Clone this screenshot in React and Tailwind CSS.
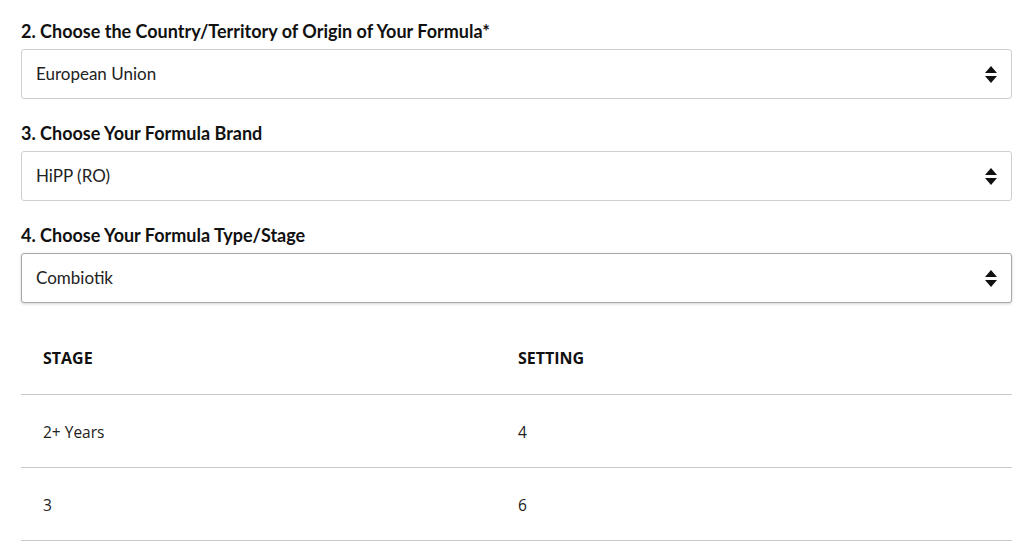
import React from 'react';

function Arrows() {
  return (
    <svg width="12" height="17" viewBox="0 0 12 17" className="shrink-0">
      <path d="M6 0 L12 7 L0 7 Z" fill="#111" />
      <path d="M0 10 L12 10 L6 17 Z" fill="#111" />
    </svg>
  );
}

function Select({ label, value, focused }) {
  return (
    <div className="flex flex-col">
      <label className="text-[18px] font-bold text-[#111] leading-[20px] pt-[1px] mb-[8px]">{label}</label>
      <div
        className={
          'h-[50px] flex items-center justify-between pl-[14px] pr-[14px] rounded-[3px] bg-white border ' +
          (focused ? 'border-[#a8a8a8] shadow-[0_1px_3px_rgba(0,0,0,0.18)]' : 'border-[#cfcfcf]')
        }
      >
        <span className="text-[17px] text-[#222]">{value}</span>
        <Arrows />
      </div>
    </div>
  );
}

const rows = [
  { stage: '2+ Years', setting: '4' },
  { stage: '3', setting: '6' },
];

export default function App() {
  return (
    <div className="w-[1034px] h-[560px] bg-white px-[21px] pt-[20px] font-['Lato',sans-serif]">
      <div className="w-[991px] flex flex-col gap-[23px]">
        <Select label="2. Choose the Country/Territory of Origin of Your Formula*" value="European Union" />
        <Select label="3. Choose Your Formula Brand" value="HiPP (RO)" />
        <Select label="4. Choose Your Formula Type/Stage" value="Combiotik" focused />
      </div>
      <div className="w-[991px] mt-[18px] font-['Open_Sans',sans-serif] text-[15.5px] text-[#222]">
        <div className="grid grid-cols-[475px_1fr] h-[74px] items-center border-b border-[#c8c8c8] pl-[22px] text-[16px] font-bold text-[#111]">
          <span>STAGE</span>
          <span>SETTING</span>
        </div>
        {rows.map((r) => (
          <div key={r.stage} className="grid grid-cols-[475px_1fr] h-[73px] items-center border-b border-[#c8c8c8] pl-[22px] pt-[3px]">
            <span>{r.stage}</span>
            <span>{r.setting}</span>
          </div>
        ))}
      </div>
    </div>
  );
}
